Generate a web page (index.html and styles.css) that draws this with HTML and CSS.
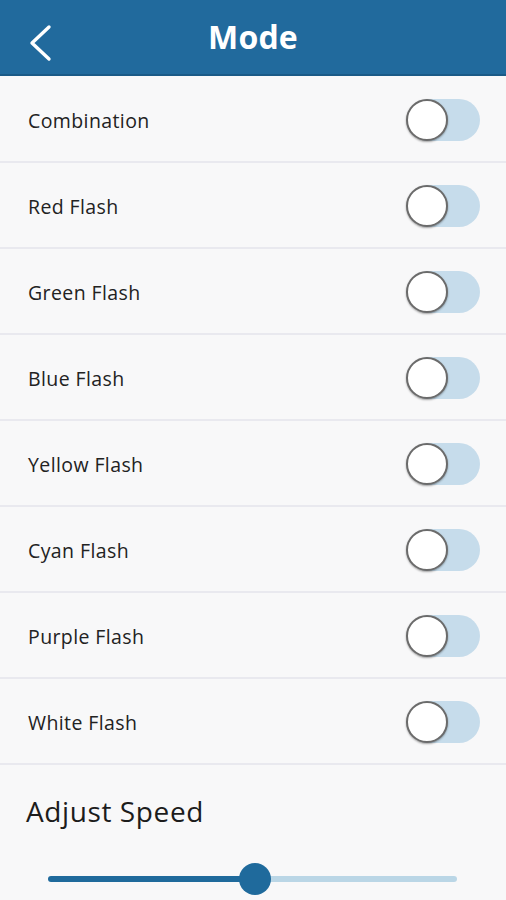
FILE: index.html
```html
<!DOCTYPE html>
<html>
<head>
<meta charset="utf-8">
<link rel="stylesheet" href="styles.css">
</head>
<body>
<header class="bar">
  <svg class="back" width="26" height="38" viewBox="0 0 26 38"><path d="M21 3 L4 19 L21 35" fill="none" stroke="#fff" stroke-width="3.4" stroke-linecap="round" stroke-linejoin="round"/></svg>
  <h1 class="title">Mode</h1>
</header>
<main>
  <ul class="list">
    <li class="row"><span>Combination</span><span class="toggle"><span class="knob"></span></span></li>
    <li class="row"><span>Red Flash</span><span class="toggle"><span class="knob"></span></span></li>
    <li class="row"><span>Green Flash</span><span class="toggle"><span class="knob"></span></span></li>
    <li class="row"><span>Blue Flash</span><span class="toggle"><span class="knob"></span></span></li>
    <li class="row"><span>Yellow Flash</span><span class="toggle"><span class="knob"></span></span></li>
    <li class="row"><span>Cyan Flash</span><span class="toggle"><span class="knob"></span></span></li>
    <li class="row"><span>Purple Flash</span><span class="toggle"><span class="knob"></span></span></li>
    <li class="row"><span>White Flash</span><span class="toggle"><span class="knob"></span></span></li>
  </ul>
  <section class="speed">
    <h2 class="speed-title">Adjust Speed</h2>
    <div class="slider">
      <div class="fill" style="width:207px"></div>
      <div class="thumb"></div>
      <div class="rest"></div>
    </div>
  </section>
</main>
</body>
</html>
```
FILE: styles.css
```css
html, body { margin: 0; padding: 0; }
body {
  width: 506px;
  height: 900px;
  overflow: hidden;
  background: #f8f8f9;
  font-family: "Open Sans", "Noto Sans", sans-serif;
  color: #222;
}
.bar {
  height: 74px;
  background: #216a9d;
  border-bottom: 2px solid #1a5a87;
  display: flex;
  align-items: center;
  justify-content: center;
  position: relative;
}
.back { position: absolute; left: 28px; top: 24px; }
.title {
  margin: 0;
  color: #fff;
  font-size: 32px;
  font-weight: 700;
  letter-spacing: 0.2px;
  line-height: 1;
}
.list { list-style: none; margin: 0; padding: 0; }
.row {
  height: 84px;
  border-bottom: 2px solid #e9e9ef;
  display: flex;
  align-items: center;
  justify-content: space-between;
  padding: 2px 26px 0 28px;
  box-sizing: content-box;
  height: 82px;
  font-size: 19.5px;
  letter-spacing: 0.4px;
}
.row:first-child { padding-top: 3px; height: 82px; }
.toggle {
  width: 72px;
  height: 42px;
  border-radius: 21px;
  background: #c6dceb;
  display: flex;
  align-items: center;
}
.knob {
  width: 38px;
  height: 38px;
  border-radius: 50%;
  background: #fff;
  border: 2px solid #6b6b6b;
  box-shadow: 0 1px 2px rgba(0,0,0,0.35);
  margin-left: -2px;
}
.speed { padding: 26px 0 0 0; }
.speed-title {
  margin: 0 0 0 26px;
  font-size: 28px;
  font-weight: 400;
  letter-spacing: 0.6px;
  line-height: 40px;
  color: #1c1c1c;
}
.slider {
  margin: 31px 0 0 48px;
  width: 409px;
  height: 34px;
  display: flex;
  align-items: center;
}
.fill { height: 6px; background: #1f6a9c; border-radius: 3px 0 0 3px; }
.thumb {
  width: 32px; height: 32px; border-radius: 50%;
  background: #1f6a9c;
  margin: 0 -16px;
  position: relative;
  z-index: 1;
}
.rest { flex: 1; height: 6px; background: #bad6e6; border-radius: 0 3px 3px 0; }
```
